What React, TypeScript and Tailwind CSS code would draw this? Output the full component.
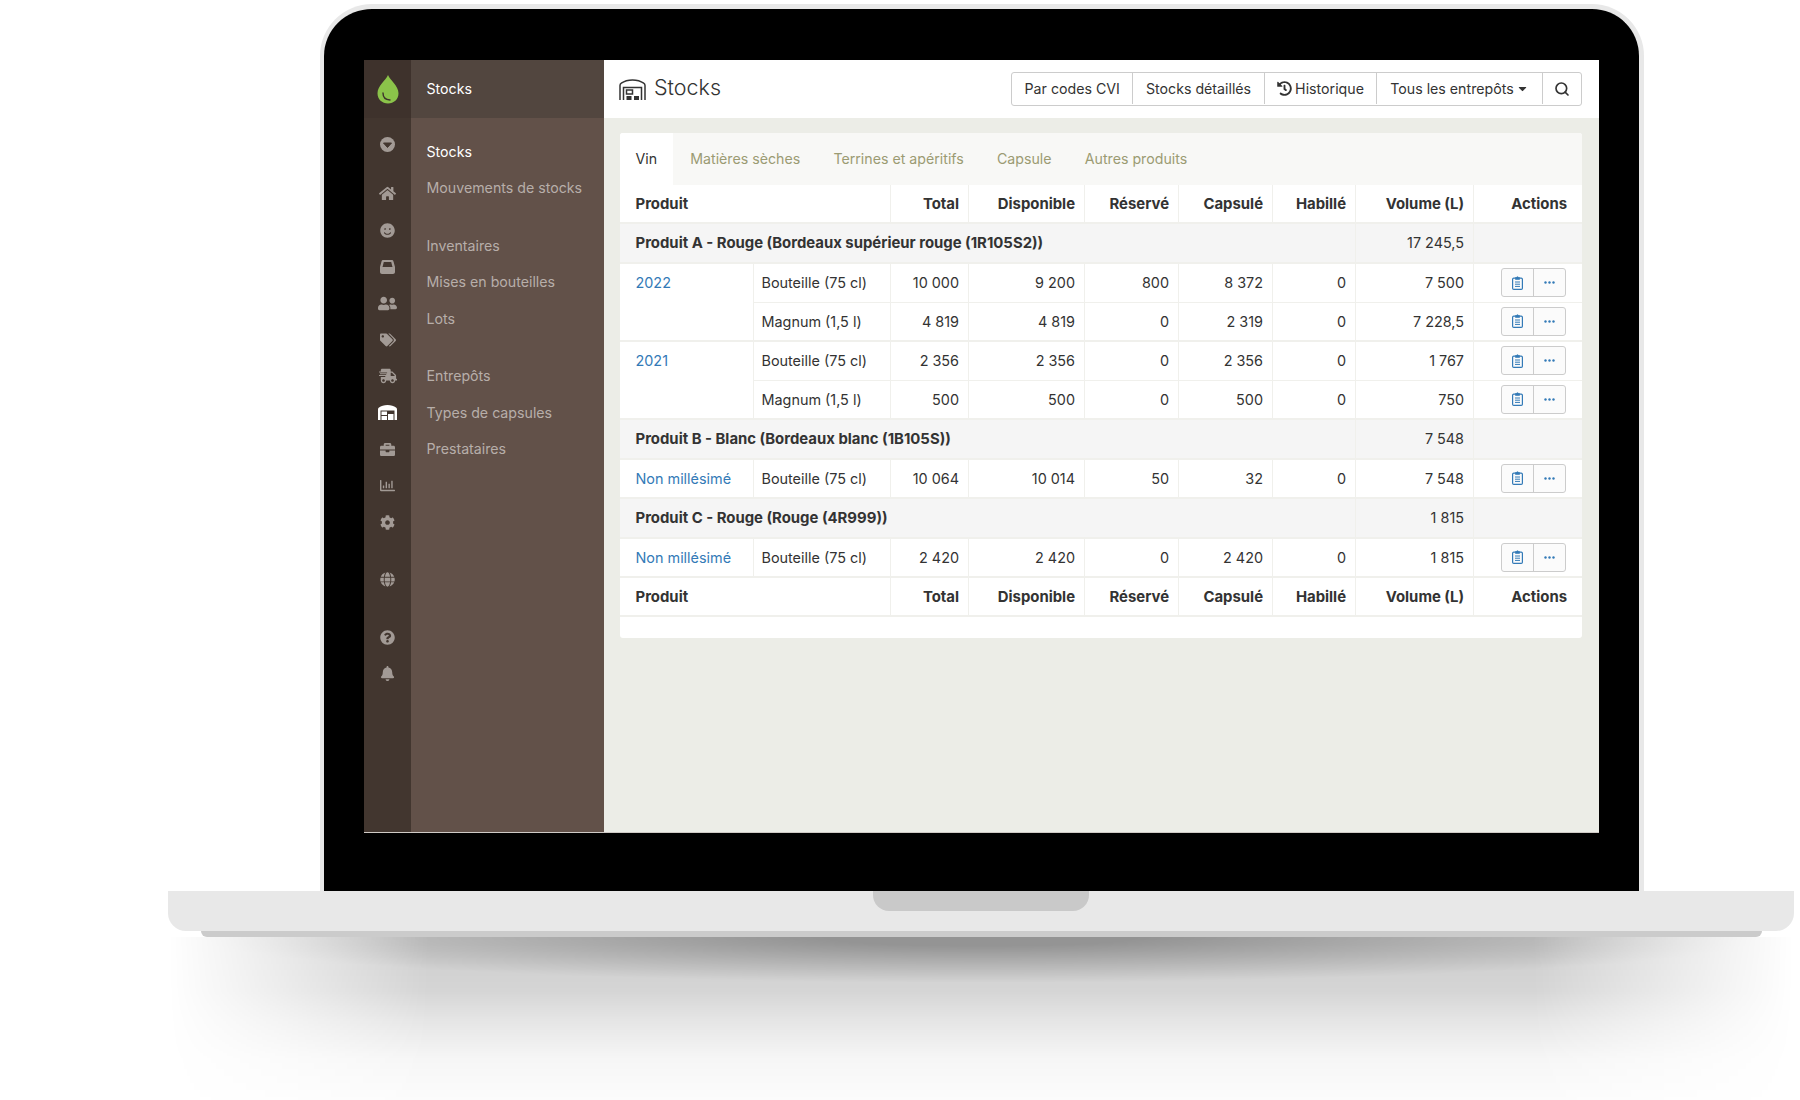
import type { FC, ReactNode } from "react";
import { Search } from "lucide-react";
import {
  FaBell,
  FaBriefcase,
  FaCaretDown,
  FaCog,
  FaGlobe,
  FaHistory,
  FaHome,
  FaQuestionCircle,
  FaRegChartBar,
  FaShippingFast,
  FaSmile,
  FaTags,
  FaUserFriends,
} from "react-icons/fa";

const Drop = () => (
  <svg width="22" height="29" viewBox="0 0 22 29">
    <path d="M11 0C13 5 21.500 11 21.500 18.200C21.500 24.200 16.800 28.500 11 28.500C5.200 28.500 .5 24.200 .5 18.200C.5 11 9 5 11 0Z" fill="#8bc34a" />
    <path d="M6 18C6 22 8.500 24.800 13 25" fill="none" stroke="#3e322c" strokeWidth="1.400" strokeLinecap="round" />
  </svg>
);

const CaretCircle = () => (
  <svg width="15" height="15" viewBox="0 0 15 15">
    <circle cx="7.500" cy="7.500" r="7.500" fill="currentColor" />
    <path d="M3.500 6H11.500L7.500 10.500Z" fill="#42362f" stroke="#42362f" strokeLinejoin="round" />
  </svg>
);

const InboxBox = () => (
  <svg width="15" height="14" viewBox="0 0 15 14" fill="currentColor">
    <path fillRule="evenodd" d="M3.500 0H11.500C12.500 0 13.200 .5 13.500 1.400L15 7V12C15 13.100 14.100 14 13 14H2C.9 14 0 13.100 0 12V7L1.500 1.400C1.800 .5 2.500 0 3.500 0ZM3.800 2L2.500 7H12.500L11.200 2Z" />
  </svg>
);

const WarehouseSolid = () => (
  <svg width="19" height="15" viewBox="0 0 19 15" fill="#fff">
    <path fillRule="evenodd" d="M9.500 0C13 0 16 1 18 2.500C18.700 3 19 3.600 19 4.400V15H16.500V5.500H2.500V15H0V4.400C0 3.600 .3 3 1 2.500C3 1 6 0 9.500 0Z" />
    <rect x="3.500" y="6.500" width="5.500" height="3.500" />
    <rect x="3.500" y="11" width="5.500" height="4" />
    <rect x="10" y="9" width="5.500" height="6" />
  </svg>
);

const WarehouseOutline = () => (
  <svg width="27" height="21" viewBox="0 0 27 21" fill="none" stroke="#333" strokeWidth="1.500">
    <path d="M1 21V6.500C1 5.500 1.400 4.800 2.300 4.200C5 2.300 9 1 13.500 1C18 1 22 2.300 24.700 4.200C25.600 4.800 26 5.500 26 6.500V21" />
    <path d="M4.500 21V8.500H22.500V21" />
    <rect x="7.500" y="11" width="6" height="4" fill="none" />
    <rect x="7.500" y="17" width="5" height="4" fill="#333" stroke="none" />
    <rect x="15" y="17" width="5" height="4" fill="#333" stroke="none" />
  </svg>
);

const ClipList = () => (
  <svg width="11" height="14" viewBox="0 0 11 14" fill="none" stroke="currentColor">
    <rect x=".6" y="2.100" width="9.800" height="11.300" rx="1.200" strokeWidth="1.200" />
    <path d="M3.500 2.500V1.500H4.500C4.500 .5 6.500 .5 6.500 1.500H7.500V3.500H3.500Z" fill="currentColor" strokeWidth=".6" />
    <path d="M3 6H8M3 8.200H8M3 10.400H8" strokeWidth="1" />
  </svg>
);

const Dots = () => (
  <svg width="11" height="3" viewBox="0 0 11 3" fill="currentColor">
    <circle cx="1.500" cy="1.500" r="1.200" />
    <circle cx="5.500" cy="1.500" r="1.200" />
    <circle cx="9.500" cy="1.500" r="1.200" />
  </svg>
);

const railIcons: { icon: ReactNode; gap?: string; active?: boolean }[] = [
  { icon: <CaretCircle />, gap: "mb-[13px]" },
  { icon: <FaHome size={17} /> },
  { icon: <FaSmile size={15} /> },
  { icon: <InboxBox /> },
  { icon: <FaUserFriends size={19} /> },
  { icon: <FaTags size={16} /> },
  { icon: <FaShippingFast size={18} /> },
  { icon: <WarehouseSolid />, active: true },
  { icon: <FaBriefcase size={15} /> },
  { icon: <FaRegChartBar size={15} /> },
  { icon: <FaCog size={15} />, gap: "mb-[21px]" },
  { icon: <FaGlobe size={15} />, gap: "mb-[21px]" },
  { icon: <FaQuestionCircle size={15} /> },
  { icon: <FaBell size={15} /> },
];

const navGroups = [
  ["Stocks", "Mouvements de stocks"],
  ["Inventaires", "Mises en bouteilles", "Lots"],
  ["Entrepôts", "Types de capsules", "Prestataires"],
];

const Sidebar = () => (
  <>
    <div className="flex w-[47px] shrink-0 flex-col bg-[#42362f]">
      <div className="flex h-[58px] items-center justify-center bg-[#3e322c]">
        <Drop />
      </div>
      <div className="flex flex-col pt-[8px]">
        {railIcons.map((r, i) => (
          <div
            key={i}
            className={`flex h-[36.500px] items-center justify-center ${r.active ? "text-white" : "text-[#a29a95]"} ${r.gap ?? ""}`}
          >
            {r.icon}
          </div>
        ))}
      </div>
    </div>
    <div className="flex w-[193px] shrink-0 flex-col bg-[#625149]">
      <div className="flex h-[58px] items-center bg-[#52463f] pl-[15.500px] text-white">Stocks</div>
      <div className="flex flex-col gap-[21px] pt-[15px] pl-[15.500px]">
        {navGroups.map((g, i) => (
          <div key={i}>
            {g.map((t) => (
              <div
                key={t}
                className={`flex h-[36.500px] items-center ${t === "Stocks" ? "text-white" : "text-[#b7aea9]"}`}
              >
                {t}
              </div>
            ))}
          </div>
        ))}
      </div>
    </div>
  </>
);

const toolbar = ["Par codes CVI", "Stocks détaillés"];

const Toolbar = () => (
  <div className="flex h-[34px] rounded-[3px] border border-[#ccc] pb-[1px] text-[#333]">
    {toolbar.map((t) => (
      <div key={t} className="flex items-center border-r border-[#ccc] px-[12.500px]">
        {t}
      </div>
    ))}
    <div className="flex items-center gap-[3px] border-r border-[#ccc] px-[12.500px]">
      <FaHistory size={15} />
      Historique
    </div>
    <div className="flex items-center gap-[2px] border-r border-[#ccc] px-[12.800px]">
      Tous les entrepôts
      <FaCaretDown size={13} />
    </div>
    <div className="flex w-[38.500px] items-center justify-center">
      <Search size={16} strokeWidth={2.500} />
    </div>
  </div>
);

const tabs = ["Vin", "Matières sèches", "Terrines et apéritifs", "Capsule", "Autres produits"];

type Row = {
  year?: string;
  span?: number;
  format: string;
  vals: string[];
  last?: boolean;
};
type Group = { name: string; volume: string; rows: Row[] };

const groups: Group[] = [
  {
    name: "Produit A - Rouge (Bordeaux supérieur rouge (1R105S2))",
    volume: "17 245,5",
    rows: [
      { year: "2022", span: 2, format: "Bouteille (75 cl)", vals: ["10 000", "9 200", "800", "8 372", "0", "7 500"] },
      { format: "Magnum (1,5 l)", vals: ["4 819", "4 819", "0", "2 319", "0", "7 228,5"], last: true },
      { year: "2021", span: 2, format: "Bouteille (75 cl)", vals: ["2 356", "2 356", "0", "2 356", "0", "1 767"] },
      { format: "Magnum (1,5 l)", vals: ["500", "500", "0", "500", "0", "750"], last: true },
    ],
  },
  {
    name: "Produit B - Blanc (Bordeaux blanc (1B105S))",
    volume: "7 548",
    rows: [{ year: "Non millésimé", span: 1, format: "Bouteille (75 cl)", vals: ["10 064", "10 014", "50", "32", "0", "7 548"], last: true }],
  },
  {
    name: "Produit C - Rouge (Rouge (4R999))",
    volume: "1 815",
    rows: [{ year: "Non millésimé", span: 1, format: "Bouteille (75 cl)", vals: ["2 420", "2 420", "0", "2 420", "0", "1 815"], last: true }],
  },
];

const cols = [133, 137, 78, 116, 94, 94, 83, 118, 109];

const HeadRow: FC = () => (
  <tr className="h-[39px] text-[14.900px] text-[#333]">
    <th colSpan={2} className="border-b-2 border-[#f0f0ec] pt-[1px] pl-[15.500px] text-left font-bold">Produit</th>
    {["Total", "Disponible", "Réservé", "Capsulé", "Habillé", "Volume (L)"].map((h) => (
      <th key={h} className="border-b-2 border-l border-[#f0f0ec] pt-[1px] pr-[9px] text-right font-bold">{h}</th>
    ))}
    <th className="border-b-2 border-l border-[#f0f0ec] pt-[1px] pr-[15px] text-right font-bold">Actions</th>
  </tr>
);

const Actions = () => (
  <div className="ml-auto flex h-[29px] w-[65px] rounded-[3px] border border-[#ccc] bg-[#fbfbfb] text-[#337ab7]">
    <div className="flex w-[32px] items-center justify-center border-r border-[#ccc]">
      <ClipList />
    </div>
    <div className="flex flex-1 items-center justify-center">
      <Dots />
    </div>
  </div>
);

const StockTable = () => (
  <table className="w-full table-fixed border-separate border-spacing-0 text-[14.400px]">
    <colgroup>
      {cols.map((c, i) => (
        <col key={i} style={{ width: c }} />
      ))}
    </colgroup>
    <thead>
      <HeadRow />
    </thead>
    {groups.map((g) => (
      <tbody key={g.name}>
        <tr className="h-[40px] bg-[#f5f5f5]">
          <td colSpan={7} className="border-b-2 border-[#f0f0ec] pt-[1px] pl-[15.500px] text-[14.900px] font-bold">{g.name}</td>
          <td className="border-b-2 border-l border-[#f0f0ec] pr-[9px] text-right">{g.volume}</td>
          <td className="border-b-2 border-l border-[#f0f0ec]" />
        </tr>
        {g.rows.map((r, i) => (
          <tr key={i} className="h-[39px]">
            {r.year && (
              <td rowSpan={r.span} className="border-b-2 border-[#f0f0ec] pt-[8px] pl-[15.500px] align-top text-[#337ab7]">
                {r.year}
              </td>
            )}
            <td className={`${r.last ? "border-b-2" : "border-b"} border-l border-[#f0f0ec] pl-[7.500px]`}>{r.format}</td>
            {r.vals.map((v, j) => (
              <td key={j} className={`${r.last ? "border-b-2" : "border-b"} border-l border-[#f0f0ec] pr-[9px] text-right`}>
                {v}
              </td>
            ))}
            <td className={`${r.last ? "border-b-2" : "border-b"} border-l border-[#f0f0ec] pr-[16px] pb-[1px]`}>
              <Actions />
            </td>
          </tr>
        ))}
      </tbody>
    ))}
    <tfoot>
      <HeadRow />
    </tfoot>
  </table>
);

const Main = () => (
  <div className="flex min-w-0 flex-1 flex-col bg-[#ecede7]">
    <div className="flex h-[58px] items-center justify-between bg-white pr-[17px] pl-[15px]">
      <div className="flex items-center gap-[8px]">
        <WarehouseOutline />
        <span className="pb-[3px] text-[21.500px] leading-none font-light text-[#333]">Stocks</span>
      </div>
      <Toolbar />
    </div>
    <div className="pt-[15px] pr-[17px] pl-[16px]">
      <div className="overflow-hidden rounded-[3px] bg-white pb-[21px] text-[#333]">
        <div className="flex h-[52px] bg-[#f8f8f6]">
          {tabs.map((t, i) => (
            <div
              key={t}
              className={`flex items-center pb-[1px] ${i === 0 ? "mr-[1px] bg-white px-[15.500px] text-[#333]" : "px-[16.600px] text-[#9b9b73]"}`}
            >
              {t}
            </div>
          ))}
        </div>
        <StockTable />
      </div>
    </div>
  </div>
);

export default function App() {
  return (
    <div className="flex h-[1100px] w-[1800px] flex-col overflow-hidden bg-white font-['Inter',sans-serif] text-[14.200px]">
      <div className="mt-[4px] ml-[320px] h-[887px] w-[1324px] rounded-t-[52px] border-t-[5px] border-r-[5px] border-l-[4px] border-[#e8e8e8] bg-black px-[40px] pt-[51px]">
        <div className="flex h-[773px] border-b border-[#cfcac6]">
          <Sidebar />
          <Main />
        </div>
      </div>
      <div className="ml-[168px] h-[40px] w-[1626px] rounded-b-[18px] bg-[#e8e8e8]">
        <div className="mx-auto h-[20px] w-[216px] rounded-b-[16px] bg-[#c9c9c9]" />
      </div>
      <div className="ml-[201px] h-[6px] w-[1561px] rounded-b-[6px] bg-[#cbcbcb]" />
      <div className="ml-[168px] h-[163px] w-[1626px] bg-[radial-gradient(ellipse_48%_28%_at_50%_0,rgba(0,0,0,0.28)_20%,transparent_100%),linear-gradient(to_bottom,rgba(0,0,0,0.2)_0%,rgba(0,0,0,0.165)_33%,rgba(0,0,0,0.1)_51%,rgba(0,0,0,0.035)_75%,rgba(0,0,0,0.01)_100%)] [mask-image:linear-gradient(to_right,transparent,black_16%,black_84%,transparent)]" />
    </div>
  );
}
